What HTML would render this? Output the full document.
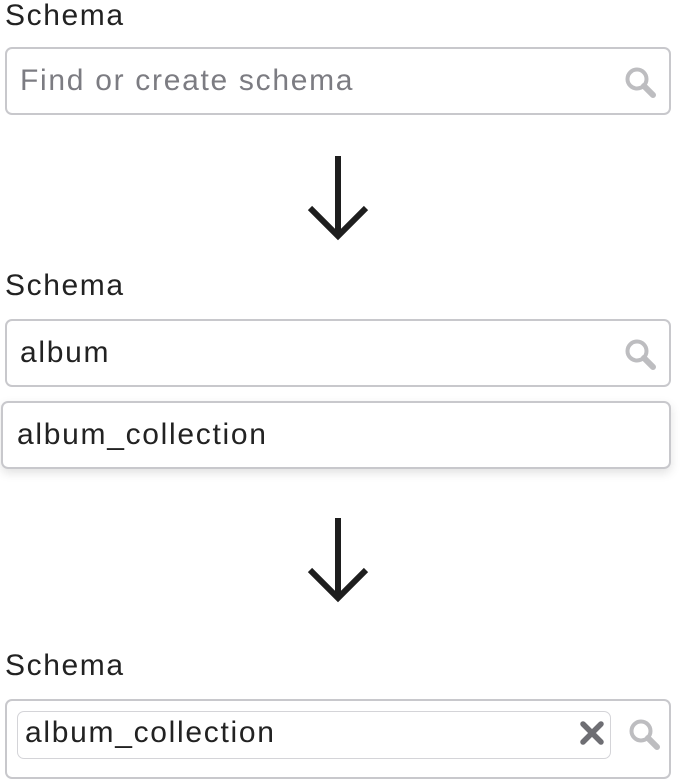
<!DOCTYPE html><html><head><style>
body{margin:0;width:688px;height:768px;background:#fff;position:relative;overflow:hidden;font-family:"Liberation Sans",sans-serif;color:#222}
.l{position:absolute;left:5px;font-size:30px;line-height:32px;letter-spacing:1.6px}
.b{position:absolute;left:5px;width:666px;border:2px solid #c8c8cc;border-radius:7px;box-sizing:border-box}
.t{position:absolute;font-size:30px;line-height:34px;letter-spacing:1.7px}
svg{position:absolute}
</style></head><body>
<div class="l" style="top:0">Schema</div>
<div class="b" style="top:47px;height:68px"></div>
<div class="t" style="left:20px;top:64px;color:#7c7c82">Find or create schema</div>
<svg style="left:622px;top:64px" width="36" height="36" viewBox="0 0 36 36"><circle cx="15" cy="15" r="9.5" fill="none" stroke="#bdbdc0" stroke-width="4"/><line x1="22" y1="22" x2="31" y2="31" stroke="#bdbdc0" stroke-width="6" stroke-linecap="round"/></svg>
<svg style="left:300px;top:150px" width="80" height="95"><path d="M38 6V86M10 58L38 86L66 58" fill="none" stroke="#1e1e1e" stroke-width="6"/></svg>
<div class="l" style="top:270px">Schema</div>
<div class="b" style="top:319px;height:68px"></div>
<div class="t" style="left:20px;top:336px">album</div>
<svg style="left:622px;top:336px" width="36" height="36" viewBox="0 0 36 36"><circle cx="15" cy="15" r="9.5" fill="none" stroke="#bdbdc0" stroke-width="4"/><line x1="22" y1="22" x2="31" y2="31" stroke="#bdbdc0" stroke-width="6" stroke-linecap="round"/></svg>
<div class="b" style="top:401px;left:1px;width:670px;height:68px;box-shadow:0 4px 10px rgba(0,0,0,.12)"></div>
<div class="t" style="left:17px;top:418px">album_collection</div>
<svg style="left:300px;top:512px" width="80" height="95"><path d="M38 6V86M10 58L38 86L66 58" fill="none" stroke="#1e1e1e" stroke-width="6"/></svg>
<div class="l" style="top:650px">Schema</div>
<div class="b" style="top:699px;height:80px"></div>
<div style="position:absolute;left:17px;top:711px;width:594px;height:48px;border:1px solid #d4d4d8;border-radius:7px;box-sizing:border-box"></div>
<div class="t" style="left:25px;top:716px">album_collection</div>
<svg style="left:578px;top:719px" width="28" height="28"><path d="M5 5L23 23M23 5L5 23" stroke="#6e6e73" stroke-width="5.5" stroke-linecap="round"/></svg>
<svg style="left:626px;top:716px" width="36" height="36" viewBox="0 0 36 36"><circle cx="15" cy="15" r="9.5" fill="none" stroke="#bdbdc0" stroke-width="4"/><line x1="22" y1="22" x2="31" y2="31" stroke="#bdbdc0" stroke-width="6" stroke-linecap="round"/></svg>
</body></html>
